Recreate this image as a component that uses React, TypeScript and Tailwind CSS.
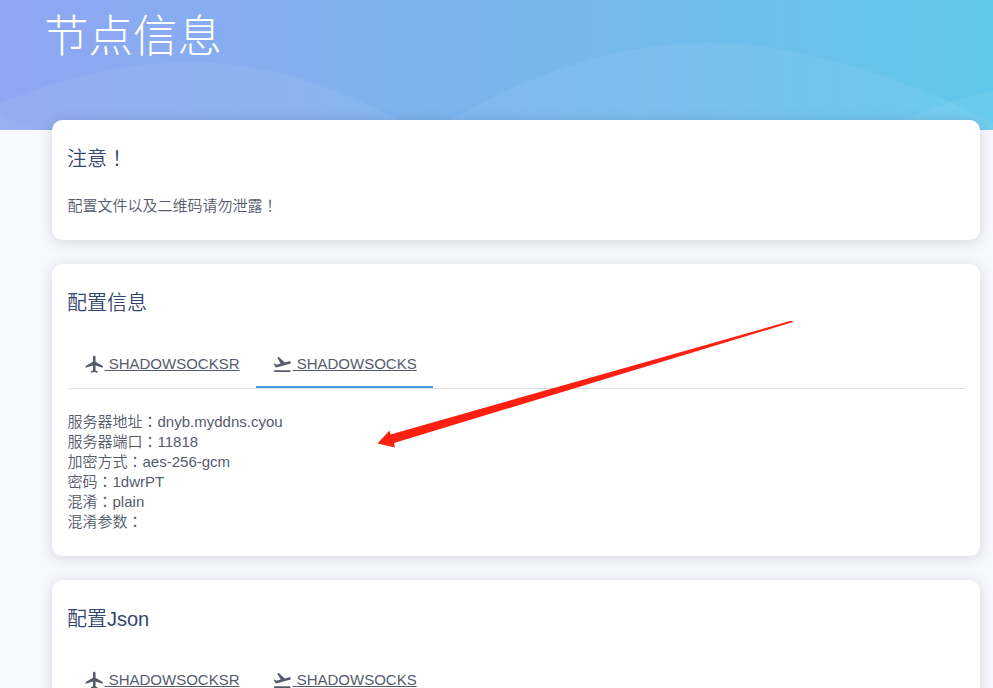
import { Fragment, type ReactNode } from "react";
import { MdFlightTakeoff, MdLocalAirport } from "react-icons/md";

// Full-width punctuation is centred in its cell
function Txt({ children }: { children: string }) {
  return (
    <>
      {children.split(/([！：])/).map((part, i) =>
        part === "！" || part === "：" ? (
          <span key={i} className="leading-none font-['Noto_Sans_CJK_TC',sans-serif]">{part}</span>
        ) : (
          <Fragment key={i}>{part}</Fragment>
        )
      )}
    </>
  );
}

function Card({ title, className, children }: { title: string; className: string; children: ReactNode }) {
  return (
    <section
      className={`rounded-[10px] bg-white px-[15.5px] pt-[24px] shadow-[0_2px_14px_rgba(40,40,60,0.17)] ${className}`}
    >
      <h2 className="-ml-[0.5px] h-[29px] text-[20px] leading-[30px] text-[#32466f]">
        <Txt>{title}</Txt>
      </h2>
      {children}
    </section>
  );
}

function Tabs() {
  return (
    <nav className="mt-[24px] flex h-[48px] border-b border-[#dfdfdf] text-[15px] leading-[46px]">
      <a className="flex h-[48px] w-[188.5px] pl-[16px]">
        <MdLocalAirport className="mt-[13px] size-[20.5px] shrink-0" />
        <span className="ml-[0.5px] whitespace-pre underline decoration-1 underline-offset-[1px]"> SHADOWSOCKSR</span>
      </a>
      <a className="flex h-[47px] w-[177px] border-b-2 border-[#4c97ea] pl-[15.5px]">
        <MdFlightTakeoff className="mt-[13px] size-[20.5px] shrink-0" />
        <span className="ml-[0.5px] whitespace-pre underline decoration-1 underline-offset-[1px]"> SHADOWSOCKS</span>
      </a>
    </nav>
  );
}

const config = [
  "服务器地址：dnyb.myddns.cyou",
  "服务器端口：11818",
  "加密方式：aes-256-gcm",
  "密码：1dwrPT",
  "混淆：plain",
  "混淆参数：",
];

export default function App() {
  return (
    <div className="relative h-[688px] w-[993px] overflow-hidden bg-[#f8f9fe] font-['Liberation_Sans','Noto_Sans_CJK_SC',sans-serif] font-[350] text-[#565b6c]">
      <header className="relative h-[130px] bg-linear-to-r from-[#8fa6f3] via-[#7ab5ee] to-[#60c9ea] pt-[4px] pl-[44px]">
        <svg className="absolute inset-0" width="993" height="130" fill="#fff" fillOpacity="0.06">
          <path d="M0 103Q100 62 190 62Q291 62 402 122L416 130H0Z" />
          <path d="M0 115L32 129L34 130H0Z" />
          <path d="M434 130Q574 43 710 43Q813 43 948 101L993 123V130Z" />
          <path d="M880 130Q937 104 993 90V130Z" />
        </svg>
        <h1 className="relative text-[44.5px] leading-[66px] font-light text-white">节点信息</h1>
      </header>
      <main className="relative -mt-[10px] ml-[52px] flex w-[928px] flex-col gap-[24px]">
        <Card title="注意！" className="h-[120px]">
          <p className="mt-[23px] text-[15px] leading-[20px]">
            <Txt>配置文件以及二维码请勿泄露！</Txt>
          </p>
        </Card>
        <Card title="配置信息" className="h-[292px]">
          <Tabs />
          <div className="mt-[23px] text-[15px] leading-[20px]">
            {config.map((line) => (
              <p key={line} className="h-[20px]">
                <Txt>{line}</Txt>
              </p>
            ))}
          </div>
        </Card>
        <Card title="配置Json" className="h-[292px]">
          <Tabs />
        </Card>
      </main>
      <svg className="pointer-events-none absolute inset-0" width="993" height="688" fill="#ff2012">
        <path d="M377.5 443.5L389.5 430.5L390.5 434.5L790 321Q793 320.5 793 322L394 443L395 447.5Z" />
      </svg>
    </div>
  );
}
